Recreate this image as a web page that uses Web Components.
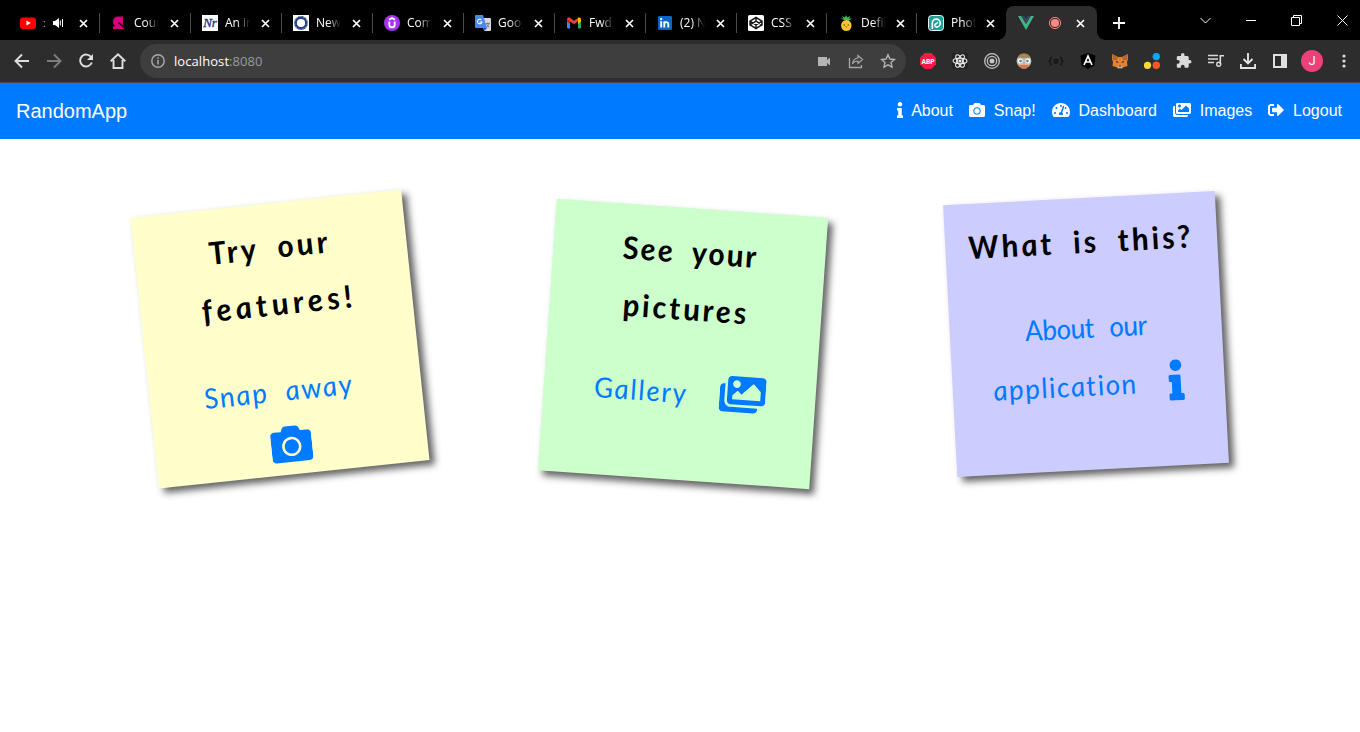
<!DOCTYPE html>
<html lang="en">
<head>
<meta charset="utf-8">
<title>RandomApp</title>
<style>
html,body{margin:0;height:100%;overflow:hidden;background:#fff;font-family:"Liberation Sans",Arial,sans-serif}
body{display:flex;flex-direction:column}
</style>
</head>
<body>
<browser-tabs></browser-tabs>
<browser-toolbar></browser-toolbar>
<app-navbar brand="RandomApp">
  <nav-link icon="info" size="16" gap="8">About</nav-link>
  <nav-link icon="camera" size="16" gap="9">Snap!</nav-link>
  <nav-link icon="gauge" size="16" gap="9">Dashboard</nav-link>
  <nav-link icon="images" size="16" gap="9">Images</nav-link>
  <nav-link icon="logout" size="16" gap="9">Logout</nav-link>
</app-navbar>
<note-board>
  <sticky-note style="--bg:#ffc;--turn:-6deg">
    <note-line kind="title" fit="119" style="margin-right:5px">Try our</note-line>
    <note-line kind="title" fit="151">features!</note-line>
    <note-line kind="link" fit="148" style="margin-top:30px;margin-right:16px">Snap away</note-line>
    <fa-icon name="camera" size="41" style="margin-top:5px"></fa-icon>
  </sticky-note>
  <sticky-note style="--bg:#cfc;--turn:4deg;--drop:5px">
    <note-line kind="title" fit="134">See your</note-line>
    <note-line kind="title" fit="124" style="margin-right:3px">pictures</note-line>
    <note-row style="margin-top:26px;gap:34px">
      <note-line kind="link" fit="92" style="position:relative;top:1px">Gallery</note-line>
      <fa-icon name="images" size="41" style="margin-top:-3px"></fa-icon>
    </note-row>
  </sticky-note>
  <sticky-note style="--bg:#ccf;--turn:-3deg;--drop:-5px">
    <note-line kind="title" fit="222" style="margin-right:3px">What is this?</note-line>
    <note-line kind="link" fit="122" style="margin-top:29px">About our</note-line>
    <note-row style="gap:33px">
      <note-line kind="link" fit="143" style="position:relative;top:1px">application</note-line>
      <fa-icon name="info" size="41"></fa-icon>
    </note-row>
  </sticky-note>
</note-board>
<script>
const FA = {
  info: [192, '<path d="M20 424.229h20V279.771H20c-11.046 0-20-8.954-20-20V212c0-11.046 8.954-20 20-20h112c11.046 0 20 8.954 20 20v212.229h20c11.046 0 20 8.954 20 20V492c0 11.046-8.954 20-20 20H20c-11.046 0-20-8.954-20-20v-47.771c0-11.046 8.954-20 20-20zM96 0C56.235 0 24 32.235 24 72s32.235 72 72 72 72-32.235 72-72S135.764 0 96 0z"/>'],
  camera: [512, '<path d="M512 144v288c0 26.5-21.5 48-48 48H48c-26.500 0-48-21.500-48-48V144c0-26.500 21.500-48 48-48h88l12.300-32.900c7-18.700 24.900-31.100 44.900-31.100h125.500c20 0 37.900 12.400 44.900 31.100L376 96h88c26.500 0 48 21.500 48 48zM376 288c0-66.200-53.800-120-120-120s-120 53.800-120 120 53.800 120 120 120 120-53.800 120-120zm-32 0c0 48.500-39.500 88-88 88s-88-39.500-88-88 39.500-88 88-88 88 39.500 88 88z"/>'],
  gauge: [576, '<path d="M288 32C128.940 32 0 160.940 0 320c0 52.800 14.250 102.260 39.060 144.800 5.610 9.620 16.300 15.200 27.440 15.200h443c11.140 0 21.830-5.580 27.440-15.200C561.750 422.260 576 372.800 576 320c0-159.060-128.940-288-288-288zm0 64c14.710 0 26.580 10.130 30.320 23.650-1.110 2.260-2.640 4.230-3.450 6.670l-9.220 27.670c-5.130 3.490-10.970 6.010-17.640 6.010-17.670 0-32-14.330-32-32S270.330 96 288 96zM96 384c-17.670 0-32-14.330-32-32s14.330-32 32-32 32 14.330 32 32-14.330 32-32 32zm48-160c-17.670 0-32-14.330-32-32s14.330-32 32-32 32 14.330 32 32-14.330 32-32 32zm246.770-72.410l-61.330 184C343.130 347.330 352 364.540 352 384c0 11.720-3.380 22.550-8.880 32H232.880c-5.500-9.450-8.880-20.280-8.880-32 0-33.940 26.500-61.430 59.900-63.590l61.340-184.010c4.170-12.560 17.730-19.450 30.360-15.170 12.570 4.190 19.350 17.790 15.170 30.360zm14.660 57.200l15.520-46.550c3.470-1.290 7.130-2.230 11.050-2.230 17.670 0 32 14.330 32 32s-14.330 32-32 32c-11.380-.010-20.890-6.280-26.570-15.220zM480 384c-17.670 0-32-14.330-32-32s14.330-32 32-32 32 14.330 32 32-14.330 32-32 32z"/>'],
  images: [576, '<path d="M480 416v16c0 26.510-21.490 48-48 48H48c-26.510 0-48-21.490-48-48V176c0-26.510 21.490-48 48-48h16v208c0 44.112 35.888 80 80 80h336zm96-80V80c0-26.510-21.490-48-48-48H144c-26.510 0-48 21.490-48 48v256c0 26.510 21.490 48 48 48h384c26.510 0 48-21.490 48-48zM256 128c0 26.510-21.490 48-48 48s-48-21.490-48-48 21.490-48 48-48 48 21.490 48 48zm-96 144l55.515-55.515c4.686-4.686 12.284-4.686 16.971 0L272 256l135.515-135.515c4.686-4.686 12.284-4.686 16.971 0L512 208v112H160v-48z"/>'],
  logout: [512, '<path d="M497 273L329 441c-15 15-41 4.500-41-17v-96H152c-13.300 0-24-10.700-24-24v-96c0-13.300 10.700-24 24-24h136V88c0-21.400 25.900-32 41-17l168 168c9.300 9.400 9.300 24.600 0 34zM192 436v-40c0-6.600-5.400-12-12-12H96c-17.700 0-32-14.300-32-32V160c0-17.700 14.300-32 32-32h84c6.600 0 12-5.400 12-12V76c0-6.600-5.400-12-12-12H96c-53 0-96 43-96 96v192c0 53 43 96 96 96h84c6.600 0 12-5.400 12-12z"/>']
};

const svg = (w, h, vb, body) => `<svg width="${w}" height="${h}" viewBox="${vb}" fill="none">${body}</svg>`;

class FaIcon extends HTMLElement {
  connectedCallback() {
    const [w, body] = FA[this.getAttribute('name')];
    const h = +this.getAttribute('size');
    this.attachShadow({mode: 'open'}).innerHTML =
      `<style>:host{display:block;flex:none;line-height:0}svg{display:block;fill:currentColor}</style>
       <svg width="${w * h / 512}" height="${h}" viewBox="0 0 ${w} 512">${body}</svg>`;
  }
}

const FAVICONS = {
  youtube: '<rect y="2.500" width="16" height="11.500" rx="3" fill="#f00"/><path d="M6.400 5.600v5l4.400-2.500z" fill="#fff"/>',
  coursera: '<path d="M6 1.500h6v8l1 4.500H2v-2.500l2.500-.5C2.500 10 2 8.500 2 7c0-3 1.500-5 4-5.500z" fill="#d6007e"/><path d="m7.500 7.500 5.500 5" stroke="#000" stroke-width="1.300"/>',
  nr: '<path d="M0 0h16v16H0z" fill="#fff"/><text x="8" y="12" text-anchor="middle" font-family="Liberation Serif,serif" font-style="italic" font-weight="400" font-size="13" stroke="#252a73" stroke-width=".3" fill="#252a73">Nr</text>',
  ring: '<path d="M0 0h16v16H0z" fill="#fff"/><circle cx="8" cy="8" r="5.500" stroke="#233f7c" stroke-width="2.800"/><circle cx="8" cy="8" r="6.400" stroke="#a8b6d2" stroke-width=".9" stroke-dasharray="2 1.500"/>',
  udemy: '<circle cx="8" cy="8" r="8" fill="#a435f0"/><path d="M5.300 6.500v3.200a2.700 2.700 0 0 0 5.400 0V6.500M5 4.700l3-1.700 3 1.700" stroke="#fff" stroke-width="1.800"/>',
  translate: '<path d="M7 3h8a1 1 0 0 1 1 1v11a1 1 0 0 1-1 1H9z" fill="#d5d8dc"/><path d="M1 0h7l4 13H1a1 1 0 0 1-1-1V1a1 1 0 0 1 1-1z" fill="#4a88ee"/><path d="m8 13 1.500 3 2.500-3z" fill="#2a56c6"/><path d="M6.400 4.900A2.300 2.300 0 1 0 7 7H4.700" stroke="#fff" stroke-width="1.100"/><path d="M10.500 8.500H15M12.800 7.500v1.200M11.500 9l2.500 3.500M14.200 9l-2.500 3.500" stroke="#777" stroke-width=".9"/>',
  gmail: '<path d="M1 4.500 4 6v7.500H2a1 1 0 0 1-1-1z" fill="#4285f4"/><path d="m12 6 3-1.500v8a1 1 0 0 1-1 1h-2z" fill="#34a853"/><path d="M1 4.500C1 2.500 3 2 4.300 3L8 5.800 11.700 3C12 2.700 12 6 12 6.300L8 9.300 1 4.500z" fill="#ea4335"/><path d="M1 4.500v2L4 9V6z" fill="#c5221f"/><path d="M12 2.800c1.500-1 3 0 3 1.700v2L12 9z" fill="#fbbc04"/>',
  linkedin: '<rect x="1" y="1" width="14" height="14" rx="1" fill="#0a66c2"/><path d="M4.200 6.300v6.200M7.300 6.300v6.200M7.300 9c0-2.300 4-2.800 4 .2v3.300" stroke="#fff" stroke-width="1.900"/><circle cx="4.200" cy="4" r="1.200" fill="#fff"/>',
  codepen: '<rect width="16" height="16" rx="1.500" fill="#fff"/><path d="m8 2.500 6 3.700v3.600l-6 3.700-6-3.700V6.200zM2 6.200l6 3.700 6-3.700M2 9.800l6-3.700 6 3.700M8 2.500v3.600M8 9.900v3.600" stroke="#1a1a1f" stroke-width="1.500"/>',
  pineapple: '<path d="M6 5 2.500 3.500l3 0L4 1l3 1.500L8 0l1.200 2.500L12.500 1 11 3.500h3L10.500 6z" fill="#2fbf5b"/><ellipse cx="8.300" cy="10.500" rx="5.200" ry="5.500" fill="#fbc62f"/><circle cx="6.300" cy="10" r=".8" fill="#784421"/><circle cx="10.300" cy="10" r=".8" fill="#784421"/><path d="M7.300 11.500q1 1 2 0" stroke="#784421" stroke-width=".6"/>',
  photopea: '<rect x=".5" y=".5" width="15" height="15" rx="3" fill="#18a497" stroke="#e8f5f3"/><path d="M4.300 14V8a4 4 0 1 1 4.300 4.100c-2 0-2.400-2.800-.6-3.400 1.200-.4 1.700-1 .8-1.300" stroke="#fff" stroke-width="1.600"/>',
  vue: '<path d="M0 1h3.300L8 9l4.700-8H16L8 15z" fill="#41b883"/><path d="M3.300 1h3L8 4l1.700-3h3L8 9z" fill="#35495e"/>'
};

class BrowserTab extends HTMLElement {
  connectedCallback() {
    const icon = this.getAttribute('icon');
    const active = this.hasAttribute('active');
    const audio = this.hasAttribute('audio');
    this.attachShadow({mode: 'open'}).innerHTML = `
    <style>
      :host{display:flex;position:relative;align-items:center;box-sizing:border-box;width:var(--w,91px);height:34px;padding-left:12px;flex:none;border-right:1px solid transparent}
      :host(:not([active]))::after{content:"";position:absolute;right:-2px;top:7px;width:1px;height:20px;background:#4c4c4c}
      :host([last])::after{display:none}
      :host([active]){background:#2d2d2d;border-radius:8px 8px 0 0;padding-left:12px;border:0}
      :host([active])::before,:host([active])::after{content:"";position:absolute;bottom:0;width:8px;height:8px}
      :host([active])::before{left:-8px;background:radial-gradient(circle at 0 0,transparent 7.500px,#2d2d2d 8px)}
      :host([active])::after{right:-8px;background:radial-gradient(circle at 100% 0,transparent 7.500px,#2d2d2d 8px)}
      svg{display:block;flex:none}
      .title{width:26px;margin-left:7px;overflow:hidden;white-space:nowrap;font:12px/18px "Open Sans","Noto Sans",sans-serif;color:#fff;-webkit-mask-image:linear-gradient(90deg,#000 45%,transparent 96%);mask-image:linear-gradient(90deg,#000 45%,transparent 96%)}
      .tiny{width:3px;margin-left:7px;overflow:hidden;font:10px/12px "Open Sans",sans-serif;color:#bbb}
      .mid{margin-left:7px}.rec{margin-left:14px}
      .close{margin-left:auto;margin-right:10px}
      :host([active]) .close{margin-right:12px}
    </style>
    ${svg(16, 16, '0 0 16 16', FAVICONS[icon])}
    ${audio ? `<span class="tiny">:</span><span class="mid">${svg(11, 12, '0 0 11 12', '<path d="M0 4h2l4-3v10L2 8H0z" fill="#fff"/><path d="M7.300 3.500v5M9.500 2v8" stroke="#fff" stroke-width="1"/>')}</span>` :
      active ? `<span class="rec">${svg(14, 14, '0 0 14 14', '<circle cx="7" cy="7" r="5.600" stroke="#f28b82"/><circle cx="7" cy="7" r="4.100" fill="#f28b82"/>')}</span>` :
      '<span class="title"><slot></slot></span>'}
    <span class="close">${svg(9, 9, '0 0 9 9', '<path d="m1 1 7 7M8 1 1 8" stroke="#fff" stroke-width="1.700"/>')}</span>`;
  }
}

class BrowserTabs extends HTMLElement {
  connectedCallback() {
    this.attachShadow({mode: 'open'}).innerHTML = `
    <style>
      :host{display:flex;height:34px;flex:none;padding:6px 0 0 8px;background:#000}
      .plus{margin:11px 0 0 16px}
      .win{display:flex;align-items:center;margin-left:auto;height:28px;gap:35px;padding-right:12px}
      svg{display:block}
    </style>
    <browser-tab icon="youtube" audio></browser-tab>
    <browser-tab icon="coursera">Cours</browser-tab>
    <browser-tab icon="nr">An in</browser-tab>
    <browser-tab icon="ring">News</browser-tab>
    <browser-tab icon="udemy">Comp</browser-tab>
    <browser-tab icon="translate">Goog</browser-tab>
    <browser-tab icon="gmail">Fwd:</browser-tab>
    <browser-tab icon="linkedin">(2) No</browser-tab>
    <browser-tab icon="codepen" style="--w:90px">CSS</browser-tab>
    <browser-tab icon="pineapple" style="--w:90px">Defin</browser-tab>
    <browser-tab icon="photopea" style="--w:90px" last>Photo</browser-tab>
    <browser-tab icon="vue" active></browser-tab>
    <span class="plus">${svg(12, 12, '0 0 12 12', '<path d="M6 0v12M0 6h12" stroke="#fff" stroke-width="1.800"/>')}</span>
    <span class="win">
      ${svg(11, 11, '0 0 11 11', '<path d="m.5 3 5 5 5-5" stroke="#fff"/>')}
      ${svg(10, 10, '0 0 10 10', '<path d="M0 5.500h10" stroke="#fff"/>')}
      ${svg(11, 11, '0 0 11 11', '<path d="M.5 2.500h8v8h-8zM2.500 2.500v-2h8v8h-2" stroke="#fff"/>')}
      ${svg(11, 11, '0 0 11 11', '<path d="m.5.5 10 10M10.500.5l-10 10" stroke="#fff"/>')}
    </span>`;
  }
}

const EXT = [
  '<path d="M4.700 0h6.600L16 4.700v6.600L11.300 16H4.700L0 11.300V4.700z" fill="#ed1e45"/><text x="1.500" y="11" font-family="Roboto,sans-serif" font-weight="700" font-size="8" textLength="13" lengthAdjust="spacingAndGlyphs" fill="#fff">ABP</text>',
  '<path d="M0 0h16v16H0z" fill="#242424"/><g stroke="#eee" stroke-width="1.100"><ellipse cx="8" cy="8" rx="7" ry="2.700"/><ellipse cx="8" cy="8" rx="7" ry="2.700" transform="rotate(60 8 8)"/><ellipse cx="8" cy="8" rx="7" ry="2.700" transform="rotate(120 8 8)"/></g><circle cx="8" cy="8" r="1.500" fill="#eee"/>',
  '<g stroke="#c4c4c4" stroke-width="1.300"><circle cx="8" cy="8" r="7.300"/><circle cx="8" cy="8" r="4.700"/></g><circle cx="8" cy="8" r="2.500" fill="#c4c4c4"/>',
  '<circle cx="8" cy="8" r="7.300" fill="#e0b083"/><path d="M1.500 5a7 7 0 0 1 13 0z" fill="#a98558"/><path d="M3 12h10c-1 3-3 4-5 4s-4-1-5-4z" fill="#d97655"/><circle cx="4.200" cy="8" r="3" fill="#f4fafc" stroke="#a9c7d2"/><circle cx="11.800" cy="8" r="3" fill="#f4fafc" stroke="#a9c7d2"/><circle cx="4.600" cy="8" r="1.300" fill="#4b86a0"/><circle cx="11.400" cy="8" r="1.300" fill="#4b86a0"/>',
  '<path d="M4 4C1.500 4 3 7.500 1.300 8 3 8.500 1.500 12 4 12M12 4c2.500 0 1 3.500 2.700 4-1.700.5-.2 4-2.700 4M5.500 6.500h5M5.500 8.200h5M5.500 10h5" stroke="#111" stroke-width="1.200"/>',
  '<path d="m8 0 7.500 2.700-1.200 9.800L8 16l-6.300-3.500L.5 2.700z" fill="#000"/><path d="m4 12 4-9 4 9M5.700 9h4.600" stroke="#fff" stroke-width="1.700"/>',
  '<path d="m0 1 6 3h4l6-3v5l-1 3 .5 4-3.500 1-2 1.500H6L4 14l-3.500-1L1 9 0 6z" fill="#e8812b"/><path d="M0 1 6 4 5 7H1zM16 1l-6 3 1 3h4z" fill="#b5652f"/><path d="m4 8.500 2 1M12 8.500l-2 1" stroke="#2c2c2c" stroke-width="1.100"/><path d="M6 12.500h4V15H6z" fill="#bfb0a8"/><path d="M7 12.500h2v1H7z" fill="#222"/>',
  '<circle cx="12.300" cy="3.500" r="3.700" fill="#03a9f4"/><circle cx="3.500" cy="12.300" r="3.600" fill="#fdd835"/><circle cx="12.300" cy="12.300" r="3.700" fill="#ff5722"/>',
  '<path transform="translate(-.6 -.6) scale(.7)" d="M20.500 11H19V7c0-1.100-.9-2-2-2h-4V3.500a2.500 2.500 0 0 0-5 0V5H4c-1.100 0-2 .9-2 2v3.800h1.500a2.700 2.700 0 0 1 0 5.400H2V20c0 1.100.9 2 2 2h3.800v-1.500a2.700 2.700 0 0 1 5.400 0V22H17c1.100 0 2-.9 2-2v-4h1.500a2.500 2.500 0 0 0 0-5z" fill="#dadada"/>',
  '<path d="M0 2.500h10M0 6h10M0 9.500h6" stroke="#dadada" stroke-width="1.600"/><path d="M12.300 11V2.700H16" stroke="#dadada" stroke-width="1.600"/><circle cx="10.700" cy="11.300" r="2" stroke="#dadada" stroke-width="1.400"/>',
  '<path d="M8 0v10M3.500 6 8 10.500 12.500 6M.9 11v4h14.200v-4" stroke="#e2e2e2" stroke-width="1.900"/>',
  '<path d="M1 1h14v14H1zm2 2v10h6V3z" fill="#dfdfdf" fill-rule="evenodd"/>'
];

class BrowserToolbar extends HTMLElement {
  connectedCallback() {
    this.attachShadow({mode: 'open'}).innerHTML = `
    <style>
      :host{display:flex;align-items:center;box-sizing:border-box;flex:none;height:43px;padding-left:14px;background:#2d2d2d;border-bottom:1px solid #4a4a4a}
      svg{display:block;flex:none}
      .nav{display:flex;gap:16px;width:126px}
      .omni{display:flex;align-items:center;box-sizing:border-box;width:766px;height:34px;border-radius:17px;background:#3e3e3e;padding:0 10px 0 11px;font:13px/18px "Open Sans","Noto Sans",sans-serif;color:#9a9a9a}
      .omni b{font-weight:400;color:#fff}
      .url{margin-left:9px;letter-spacing:.07px}
      .right{display:flex;gap:16px;margin-left:auto}
      .ext{display:flex;gap:16px;margin-left:14px}
      .ava{width:22px;height:22px;border-radius:50%;background:#ec407a;color:#fff;font:13px/22px Roboto,sans-serif;text-align:center;margin-left:13px;flex:none}
      .dots{margin-left:19px}
    </style>
    <span class="nav">
      ${svg(16, 16, '0 0 16 16', '<path d="M15 8H2M8 1.500 1.500 8 8 14.500" stroke="#dedede" stroke-width="1.900"/>')}
      ${svg(16, 16, '0 0 16 16', '<path d="M1 8h13M8 1.500 14.500 8 8 14.500" stroke="#7d7d7d" stroke-width="1.900"/>')}
      ${svg(16, 16, '0 0 16 16', '<path d="M13.300 4.500A6 6 0 1 0 13.800 9.500" stroke="#dedede" stroke-width="1.900"/><path d="M15 1v6H9z" fill="#dedede"/>')}
      ${svg(16, 16, '0 0 16 16', '<path d="M.7 8.300 8 1.300l7.300 7M3.500 7v8h9V7" stroke="#dedede" stroke-width="1.900"/>')}
    </span>
    <span class="omni">
      ${svg(14, 14, '0 0 14 14', '<circle cx="7" cy="7" r="6.200" stroke="#aaa" stroke-width="1.400"/><path d="M7 6v4.500M7 3.300v1.500" stroke="#aaa" stroke-width="1.500"/>')}
      <span class="url"><b>localhost</b>:8080</span>
      <span class="right">
        ${svg(16, 16, '0 0 16 16', '<path d="M2 4h9v3l3-2.500v8L11 10v3H2z" fill="#b4b4b4"/>')}
        ${svg(16, 16, '0 0 16 16', '<path d="M1.500 5v9.500h12V12" stroke="#a8a8a8" stroke-width="1.300"/><path d="M10 2.500 14.500 6.500 10 10.500V8Q6 8 4.500 11 5 5.500 10 5z" stroke="#a8a8a8" stroke-width="1.200"/>')}
        ${svg(16, 16, '0 0 16 16', '<path d="m8 1.800 1.900 4.200 4.600.5-3.400 3.100.9 4.600-4-2.300-4 2.300.9-4.600L1.500 6.500 6.100 6z" stroke="#b4b4b4" stroke-width="1.400"/>')}
      </span>
    </span>
    <span class="ext">${EXT.map(e => svg(16, 16, '0 0 16 16', e)).join('')}</span>
    <span class="ava">J</span>
    <span class="dots">${svg(4, 14, '0 0 4 14', '<g fill="#dedede"><circle cx="2" cy="2" r="1.600"/><circle cx="2" cy="7" r="1.600"/><circle cx="2" cy="12" r="1.600"/></g>')}</span>`;
  }
}

class AppNavbar extends HTMLElement {
  connectedCallback() {
    this.attachShadow({mode: 'open'}).innerHTML = `
    <style>
      :host{display:flex;align-items:center;justify-content:space-between;box-sizing:border-box;flex:none;height:56px;padding:0 18px 0 16px;background:#007bff;color:#fff}
      .brand{font-size:20px;line-height:30px}
      .links{display:flex;gap:15.900px}
    </style>
    <span class="brand">${this.getAttribute('brand')}</span><nav class="links"><slot></slot></nav>`;
  }
}

class NavLink extends HTMLElement {
  connectedCallback() {
    this.attachShadow({mode: 'open'}).innerHTML = `
    <style>:host{display:flex;align-items:center;gap:${this.getAttribute('gap')}px;font-size:16px;line-height:24px}fa-icon{margin-top:-2px}</style>
    <fa-icon name="${this.getAttribute('icon')}" size="${this.getAttribute('size')}"></fa-icon><span><slot></slot></span>`;
  }
}

class NoteBoard extends HTMLElement {
  connectedCallback() {
    this.attachShadow({mode: 'open'}).innerHTML =
      '<style>:host{display:flex;gap:131px;padding:64px 0 0 144px}</style><slot></slot>';
  }
}

class StickyNote extends HTMLElement {
  connectedCallback() {
    this.attachShadow({mode: 'open'}).innerHTML = `
    <style>:host{display:flex;flex-direction:column;align-items:center;box-sizing:border-box;width:272px;height:272px;flex:none;padding-top:15px;background:var(--bg);box-shadow:5px 5px 7px rgba(33,33,33,.7);transform:translateY(var(--drop,0px)) rotate(var(--turn));color:#007bff}</style>
    <slot></slot>`;
  }
}

class NoteRow extends HTMLElement {
  connectedCallback() {
    this.attachShadow({mode: 'open'}).innerHTML =
      '<style>:host{display:flex;align-items:center}</style><slot></slot>';
  }
}

/* One handwritten line; letter spacing is adjusted so the line spans `fit` pixels. */
class NoteLine extends HTMLElement {
  connectedCallback() {
    this.attachShadow({mode: 'open'}).innerHTML = `
    <style>
      :host{display:block;white-space:nowrap;height:57px;line-height:57px;font-family:Lato,sans-serif;font-size:28px;font-style:italic;font-weight:400;word-spacing:9px;transform:skewX(7deg)}
      :host([kind=title]){color:#000;font-weight:700;font-size:31px}
    </style><span><slot></slot></span>`;
    const span = this.shadowRoot.querySelector('span');
    const n = this.textContent.length;
    const ls = (this.getAttribute('fit') - span.offsetWidth) / (n - 1);
    span.style.letterSpacing = ls + 'px';
    span.style.marginRight = -ls + 'px';
  }
}

customElements.define('fa-icon', FaIcon);
customElements.define('browser-tab', BrowserTab);
customElements.define('browser-tabs', BrowserTabs);
customElements.define('browser-toolbar', BrowserToolbar);
customElements.define('nav-link', NavLink);
customElements.define('app-navbar', AppNavbar);
customElements.define('note-line', NoteLine);
customElements.define('note-row', NoteRow);
customElements.define('sticky-note', StickyNote);
customElements.define('note-board', NoteBoard);
</script>
</body>
</html>
